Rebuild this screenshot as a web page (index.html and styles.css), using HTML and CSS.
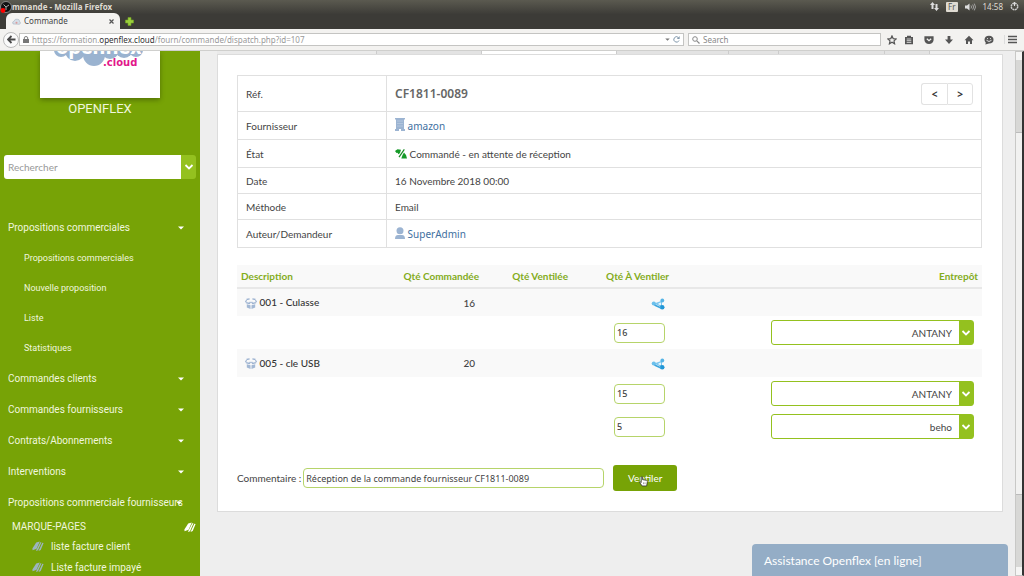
FILE: index.html
```html
<!DOCTYPE html>
<html lang="fr">
<head>
<meta charset="utf-8">
<title>Commande</title>
<link rel="stylesheet" href="styles.css">
</head>
<body>
<svg class="defs" aria-hidden="true">
  <symbol id="chevron" viewBox="0 0 10 8"><path d="M1.500 2 5 5.500 8.500 2" fill="none" stroke="currentColor" stroke-width="1.800"/></symbol>
  <symbol id="caret" viewBox="0 0 6 4"><path d="M0 .5h6L3 3.500z" fill="currentColor"/></symbol>
  <symbol id="book" viewBox="0 0 12 11"><path d="M4.200 1.500 7.800.6 4.600 7.800.6 9.200.4 7.500z" fill="currentColor"/><path d="M8.300 1.200h1.200L6 9.200 3.800 10zM10.300 1.800l1.300.2L8.700 9l-2.200 1z" fill="currentColor"/></symbol>
  <symbol id="box" viewBox="0 0 12 12"><path d="M1.500 1.500 4.600.9M7.400.9l3.100.6M.4 4.300l1.100-2M11.600 4.300l-1.100-2M1 4.700l3.300.8L5.500 3.800M11 4.700l-3.300.8L6.500 3.800" fill="none" stroke="#9cb2d0" stroke-width="1.300"/><path d="M1.800 6.200 5.500 7.300V11L1.800 9.500zM10.200 6.200 6.500 7.300V11l3.700-1.500z" fill="#a3b8d4"/></symbol>
  <symbol id="split" viewBox="0 0 14 12"><path d="M3 5.500 11 2.800v6.500z" fill="#7cc6ee"/><path d="M7.500 5.200 10 4.400v3L7.500 6.600z" fill="#e4f4fc"/><circle cx="2.800" cy="5.500" r="2.100" fill="#6cc0ec"/><circle cx="11.300" cy="2.500" r="1.900" fill="#55b4e6"/><circle cx="11.200" cy="9.300" r="2.300" fill="#2196d6"/><path d="M3.500 7 10 10" stroke="#3ba5de" stroke-width="1.600"/></symbol>
</svg>
<header class="titlebar">
  <div class="window-row">
    <svg class="orb" viewBox="0 0 12 12" aria-hidden="true"><circle cx="6" cy="6" r="5.500" fill="#111" stroke="#aaa" stroke-width=".7"/><path d="M3.500 3.500 6 6l3-2M6 6v3" stroke="#aaa" fill="none"/><circle cx="3" cy="9.500" r="2.400" fill="#f00"/></svg>
    <span class="window-title">mmande - Mozilla Firefox</span>
    <div class="tray">
      <svg width="9" height="9" viewBox="0 0 9 9" aria-label="Réseau"><path d="M2.500 0 5 3H3.500v4h-2V3H0zM6.500 9 9 6H7.500V2h-2v4H4z" fill="#ddd"/></svg>
      <span class="lang">Fr</span>
      <svg width="11" height="8" viewBox="0 0 11 8" aria-label="Volume"><path d="M0 2.500h2L4.500.5v7L2 5.500H0z" fill="#ddd"/><path d="M6 2.500q1 1.500 0 3M7.700 1.500q1.700 2.500 0 5M9.300.6q2.400 3.400 0 6.800" fill="none" stroke="#bbb" stroke-width=".8"/></svg>
      <span>14:58</span>
      <svg width="9" height="9" viewBox="0 0 10 10" aria-label="Session"><circle cx="5" cy="5" r="3.600" fill="none" stroke="#ccc" stroke-width="1.600" stroke-dasharray="2.200 .6"/><path d="M5 0v4.500" stroke="#ddd" stroke-width="1.300"/></svg>
    </div>
  </div>
  <div class="tab-row">
    <div class="tab">
      <svg width="9" height="7" viewBox="0 0 9 7" aria-hidden="true"><path d="M1 6Q-.2 3.500 2.200 3 3 .5 5.200 1.200 7.500 1 7.700 3.600 9.500 5 7.500 6.300z" fill="#d6dfe8" stroke="#9cabb9" stroke-width=".5"/><circle cx="4.500" cy="4.800" r="1" fill="#d99"/></svg>
      <span class="tab-name">Commande</span>
      <button class="plain" aria-label="Fermer l'onglet"><svg width="5" height="5" viewBox="0 0 5 5"><path d="m.5.5 4 4m0-4-4 4" stroke="#555" stroke-width="1.200"/></svg></button>
    </div>
    <button class="plain" aria-label="Nouvel onglet"><svg width="9" height="9" viewBox="0 0 9 9"><path d="M3 .5h3V3h2.500v3H6v2.500H3V6H.5V3H3z" fill="#9bcf3c" stroke="#74a524" stroke-width=".6"/></svg></button>
  </div>
</header>
<nav class="toolbar" aria-label="Navigation">
  <button class="back" aria-label="Retour"><svg width="9" height="9" viewBox="0 0 9 9"><path d="M4.500 1 1 4.500 4.500 8M1 4.500h7.500" fill="none" stroke="#4a4a4a" stroke-width="1.800"/></svg></button>
  <div class="address">
    <svg width="6" height="7" viewBox="0 0 6 7" aria-hidden="true"><path d="M0 3h6v4H0z" fill="#777"/><path d="M1.300 3V1.800q0-1.200 1.700-1.200t1.700 1.200V3" fill="none" stroke="#777"/></svg>
    <span class="url">https://formation.<b>openflex.cloud</b>/fourn/commande/dispatch.php?id=107</span>
    <svg width="5" height="3" class="muted"><use href="#caret"/></svg>
    <svg width="7" height="7" viewBox="0 0 7 7" aria-hidden="true"><path d="M5.300 1.400A2.700 2.700 0 1 0 6 4.500" fill="none" stroke="#8298ab"/><path d="M6.600 0v3H3.800z" fill="#8298ab"/></svg>
  </div>
  <div class="find">
    <svg width="8" height="8" viewBox="0 0 8 8" aria-hidden="true"><circle cx="3" cy="3" r="2.300" fill="none" stroke="#888"/><path d="m4.800 4.800 2.700 2.700" stroke="#888" stroke-width="1.200"/></svg>
    <input type="text" placeholder="Search" aria-label="Search">
  </div>
  <div class="tools">
    <span class="bookmarks">
      <button class="plain" aria-label="Favoris"><svg width="10" height="10" viewBox="0 0 10 10"><path d="m5 .9 1.200 2.700 3 .3L7 5.900l.6 2.900L5 7.300 2.400 8.800 3 5.900.8 3.900l3-.3z" fill="none" stroke="#555" stroke-width="1.200"/></svg></button>
      <button class="plain" aria-label="Liste"><svg width="10" height="10" viewBox="0 0 10 10"><path d="M1 2h2V.7h4V2h2v7.300H1z" fill="#555"/><path d="M2.700 4h4.600M2.700 5.700h4.600M2.700 7.400h4.600" stroke="#eee" stroke-width=".8"/></svg></button>
    </span>
    <button class="plain" aria-label="Pocket"><svg width="10" height="10" viewBox="0 0 10 10"><path d="M.4 1.200h9.200V5Q9 9 5 9 1 9 .4 5z" fill="#555"/><path d="m2.800 3.800 2.200 2 2.200-2" fill="none" stroke="#f4f4f2" stroke-width="1.200"/></svg></button>
    <button class="plain" aria-label="Téléchargements"><svg width="10" height="10" viewBox="0 0 10 10"><path d="M3.600 1h2.800v3.600H9L5 9 1 4.600h2.600z" fill="#555"/></svg></button>
    <button class="plain" aria-label="Accueil"><svg width="10" height="10" viewBox="0 0 10 10"><path d="m5 .8 4.500 4.400H8V9H6V6.500H4V9H2V5.200H.5z" fill="#555"/></svg></button>
    <button class="plain" aria-label="Discussion"><svg width="10" height="10" viewBox="0 0 10 10"><path d="M5 .8q4.500.3 4.500 4T5 8.600L1.300 9.500 1.800 7.700Q.5 6.500.5 4.800.7 1 5 .8z" fill="#555"/><path d="M3 3.600h1m2 0h1M2.500 5.300q2.500 2.400 5 0" fill="none" stroke="#eee" stroke-width=".9"/></svg></button>
    <button class="plain menu" aria-label="Menu"><svg width="9" height="9" viewBox="0 0 9 9"><path d="M0 1.500h9M0 4.500h9M0 7.500h9" stroke="#555" stroke-width="1.600"/></svg></button>
  </div>
</nav>
<div class="viewport">
  <aside class="sidebar">
    <div class="logo">
      <svg viewBox="0 0 120 47" aria-label="openflex.cloud"><g fill="#9ab3d0"><circle cx="21" cy="-1" r="7"/><circle cx="35" cy="0" r="10"/><circle cx="54" cy="4" r="11"/><circle cx="70" cy="-1" r="9"/><circle cx="84" cy="-2" r="9"/><circle cx="96" cy="-1" r="7"/></g><text class="logo-main" x="16" y="3">openflex</text><text class="logo-sub" x="63" y="15">.cloud</text></svg>
    </div>
    <h1 class="brand">OPENFLEX</h1>
    <div class="search">
      <input type="text" placeholder="Rechercher" aria-label="Rechercher">
      <button class="search-open" aria-label="Choisir le type de recherche"><svg width="10" height="8"><use href="#chevron"/></svg></button>
    </div>
    <nav class="menu-list" aria-label="Menu principal">
      <a class="group" href="#">Propositions commerciales<svg class="arrow"><use href="#caret"/></svg></a>
      <a class="item" href="#">Propositions commerciales</a>
      <a class="item" href="#">Nouvelle proposition</a>
      <a class="item" href="#">Liste</a>
      <a class="item" href="#">Statistiques</a>
      <a class="group" href="#">Commandes clients<svg class="arrow"><use href="#caret"/></svg></a>
      <a class="group" href="#">Commandes fournisseurs<svg class="arrow"><use href="#caret"/></svg></a>
      <a class="group" href="#">Contrats/Abonnements<svg class="arrow"><use href="#caret"/></svg></a>
      <a class="group" href="#">Interventions<svg class="arrow"><use href="#caret"/></svg></a>
      <a class="group" href="#">Propositions commerciale fournisseurs<svg class="arrow"><use href="#caret"/></svg></a>
    </nav>
    <h2 class="marks-title">MARQUE-PAGES<svg width="12" height="11"><use href="#book"/></svg></h2>
    <a class="mark" href="#"><svg width="12" height="11"><use href="#book"/></svg>liste facture client</a>
    <a class="mark" href="#"><svg width="12" height="11"><use href="#book"/></svg>Liste facture impayé</a>
  </aside>
  <main class="content">
    <div class="page-tabs"><i></i><i></i><i class="active"></i><i></i><i></i><i></i><i></i></div>
    <section class="card">
      <table class="details">
        <tr class="ref-row"><th scope="row">Réf.</th><td><div class="ref"><strong>CF1811-0089</strong><span class="pager"><a href="#" aria-label="Précédent">&lt;</a><a href="#" aria-label="Suivant">&gt;</a></span></div></td></tr>
        <tr class="tall"><th scope="row">Fournisseur</th><td><a href="#"><svg width="10" height="13" viewBox="0 0 10 13" aria-hidden="true"><path d="M0 0h10v1.500H9V11h1v2H6v-2H4v2H0v-2h1V1.500H0z" fill="#9cb4d2"/><path d="M2.500 3h5M2.500 5.500h5M2.500 8h5" stroke="#c9d7e8" stroke-dasharray="1 1"/></svg> amazon</a></td></tr>
        <tr class="tall"><th scope="row">État</th><td><svg width="12" height="10" viewBox="0 0 12 10" aria-hidden="true"><path d="M0 2 2.500.3 6 .8 5 4 3.500 5.200 2.500 3.800 1.500 4z" fill="#169a28"/><path d="m8.800 0 1 .7L4.500 8.500l-1-.7z" fill="#168a22"/><path d="M9 3.500 11 6l1 3.500H6.300L7.500 6z" fill="#169a28"/></svg> Commandé - en attente de réception</td></tr>
        <tr><th scope="row">Date</th><td>16 Novembre 2018 00:00</td></tr>
        <tr><th scope="row">Méthode</th><td>Email</td></tr>
        <tr class="tall"><th scope="row">Auteur/Demandeur</th><td><a href="#"><svg width="10" height="12" viewBox="0 0 10 12" aria-hidden="true"><circle cx="5" cy="3.700" r="3.500" fill="#9cb4d2"/><path d="M0 12q0-4 3-4h4q3 0 3 4z" fill="#9cb4d2"/></svg> SuperAdmin</a></td></tr>
      </table>
      <table class="lines">
        <colgroup><col class="c-desc"><col class="c-qty"><col class="c-vent"><col class="c-todo"><col></colgroup>
        <thead><tr><th>Description</th><th>Qté Commandée</th><th>Qté Ventilée</th><th>Qté À Ventiler</th><th class="end">Entrepôt</th></tr></thead>
        <tbody>
          <tr class="product"><td class="name"><svg width="12" height="12"><use href="#box"/></svg> 001 - Culasse</td><td class="num">16</td><td></td><td class="num"><svg width="14" height="12"><use href="#split"/></svg></td><td></td></tr>
          <tr class="entry"><td colspan="3"></td><td class="num"><input type="text" value="16" aria-label="Quantité 001"></td><td class="end"><select aria-label="Entrepôt 001"><option>ANTANY</option><option>beho</option></select></td></tr>
          <tr class="product"><td class="name"><svg width="12" height="12"><use href="#box"/></svg> 005 - cle USB</td><td class="num">20</td><td></td><td class="num"><svg width="14" height="12"><use href="#split"/></svg></td><td></td></tr>
          <tr class="entry"><td colspan="3"></td><td class="num"><input type="text" value="15" aria-label="Quantité 005"></td><td class="end"><select aria-label="Entrepôt 005"><option>ANTANY</option><option>beho</option></select></td></tr>
          <tr class="entry"><td colspan="3"></td><td class="num"><input type="text" value="5" aria-label="Quantité 005, ligne 2"></td><td class="end"><select aria-label="Entrepôt 005, ligne 2"><option>beho</option><option>ANTANY</option></select></td></tr>
        </tbody>
      </table>
      <form class="comment">
        <label for="comment">Commentaire :</label>
        <input id="comment" type="text" value="Réception de la commande fournisseur CF1811-0089">
        <button type="button" class="submit">Ventiler<svg class="hand" viewBox="0 0 10 12" aria-hidden="true"><path d="M2.500 6.500V1.500q.8-1 1.500 0v3l4.500.8q.8.300.8 1.200L8.500 11.500h-5L.7 7.600q0-1.300 1.800 0z" fill="#fff" stroke="#222" stroke-width=".8"/><path d="M5 7.500v2M6.700 7.500v2" stroke="#555" stroke-width=".6"/></svg></button>
      </form>
    </section>
    <button class="chat">Assistance Openflex [en ligne]</button>
  </main>
  <div class="scrollbar" aria-hidden="true"><span class="cap"></span><span class="track"></span><span class="thumb"></span><span class="track"></span><span class="cap"></span></div>
</div>
</body>
</html>
```
FILE: styles.css
```css
* { box-sizing: border-box; }
body {
  margin: 0;
  height: 100vh;
  display: flex;
  flex-direction: column;
  overflow: hidden;
  font: 10px/14px "Noto Sans", sans-serif;
  color: #444;
}
a { color: inherit; text-decoration: none; }
button, input, select { font: inherit; color: inherit; }
.defs { display: none; }
.plain { display: flex; padding: 0; border: 0; background: none; }

/* Browser window */
.titlebar {
  flex: none;
  background: linear-gradient(#5b5a50, #3c3b37 50%);
  color: #dfdbd2;
}
.window-row { display: flex; align-items: center; height: 13px; padding-right: 5px; font-size: 8px; line-height: 13px; }
.orb { width: 12px; height: 12px; flex: none; }
.window-title { font-weight: bold; }
.tray { margin-left: auto; display: flex; align-items: center; gap: 7px; }
.lang { background: #dfdbd2; color: #555; padding: 0 2px; line-height: 10px; border-radius: 1px; }
.tab-row { display: flex; align-items: center; height: 16px; gap: 5px; padding-left: 6px; }
.tab {
  display: flex;
  align-items: center;
  gap: 3px;
  width: 114px;
  height: 16px;
  padding: 0 6px;
  background: #f4f3f1;
  border-radius: 6px 6px 0 0;
  color: #444;
  font-size: 8px;
}
.tab-name { flex: 1; }
.toolbar {
  flex: none;
  display: flex;
  align-items: center;
  height: 22px;
  padding: 0 7px 0 3px;
  background: #f3f2f0;
  border-bottom: 1px solid #cfcfcd;
  font-size: 8px;
}
.back {
  flex: none;
  display: grid;
  place-items: center;
  width: 16px;
  height: 16px;
  padding: 0;
  border: 1px solid #bbb;
  border-radius: 50%;
  background: #fafafa;
}
.address, .find { display: flex; align-items: center; height: 13px; background: #fff; border: 1px solid #c4c4c2; }
.address { flex: 1; gap: 3px; padding: 0 3px; color: #999; }
.address b { font-weight: normal; color: #333; }
.url { flex: 1; }
.muted { color: #777; }
.find { width: 193px; margin-left: 4px; gap: 3px; padding: 0 3px; }
.find input { flex: 1; min-width: 0; padding: 0; border: 0; background: none; }
.find input::placeholder { color: #888; }
.tools { display: flex; align-items: center; gap: 10px; padding-left: 6px; }
.bookmarks { display: flex; gap: 7px; }
.menu { padding-left: 3px; border-left: 1px solid #ddd; }

.viewport { flex: 1; min-height: 0; display: flex; overflow: hidden; background: #eee; }

/* Sidebar */
.sidebar {
  flex: none;
  width: 200px;
  overflow: hidden;
  background: #77a306;
  color: #f0f6df;
  font-family: Roboto, sans-serif;
}
.logo { width: 120px; height: 47px; margin: 0 auto; background: #fff; box-shadow: 0 2px 5px rgba(0, 0, 0, .3); }
.logo svg { display: block; width: 120px; height: 47px; overflow: hidden; }
.logo-main { font: bold 22px Roboto, sans-serif; fill: #fff; }
.logo-sub { font: bold 10px "DejaVu Sans", sans-serif; fill: #e2178a; }
.brand { margin: 3px 0 0; font-size: 13px; line-height: 16px; font-weight: normal; text-align: center; }
.search { display: flex; height: 24px; margin: 38px 4px 0; border-radius: 3px; overflow: hidden; }
.search input { flex: 1; min-width: 0; padding: 0 4px; border: 0; background: #fff; font-family: Lato, sans-serif; }
.search input::placeholder { color: #999; }
.search-open { display: grid; place-items: center; width: 15px; padding: 0; border: 0; background: #94c11f; color: #fff; }
.menu-list { margin-top: 33px; }
.group { display: flex; align-items: center; height: 31px; padding: 0 16px 0 8px; white-space: nowrap; }
.arrow { flex: none; width: 6px; height: 4px; margin-left: auto; color: #fff; }
.group:last-child .arrow { margin-left: -7px; }
.item { display: flex; align-items: center; height: 30px; padding-left: 24px; font-size: 9px; }
.marks-title { display: flex; justify-content: space-between; align-items: center; height: 18px; margin: 0; padding: 0 4px 0 12px; font-size: 10px; font-weight: normal; }
.marks-title svg { color: #fff; }
.mark { display: flex; align-items: center; gap: 7px; height: 21px; padding-left: 32px; }
.mark svg { color: #9cb4c0; }

/* Page */
.content { flex: 1; min-width: 0; padding: 0 12px 0 17px; position: relative; font-family: Lato, sans-serif; }
.page-tabs { display: flex; height: 3px; }
.page-tabs i { width: 50px; background: #e3e3e3; border-right: 1px solid #ccc; }
.page-tabs i:nth-child(1) { width: 160px; background: #eaeaea; }
.page-tabs i:nth-child(2) { width: 105px; }
.page-tabs i.active { width: 135px; background: #fff; }
.page-tabs i:nth-child(4) { width: 112px; }
.page-tabs i:nth-child(6) { width: 106px; }
.page-tabs i:nth-child(7) { width: 45px; }
.card { padding: 20px 20px 20px 19px; background: #fff; border: 1px solid #dcdcdc; }
.details, .lines { width: 100%; border-collapse: collapse; }
.details { border: 1px solid #e0e0e0; }
.details th, .details td { height: 26px; padding: 0 8px; border: 1px solid #e0e0e0; text-align: left; font-weight: normal; }
.details th { width: 149px; }
.details .tall > * { height: 28px; }
.details .ref-row > * { height: 36px; }
.details svg { vertical-align: -1px; }
.details td a { color: #41709f; font-family: "Noto Sans", sans-serif; }
.ref { display: flex; align-items: center; justify-content: space-between; }
.ref strong { font: 600 12px "Noto Sans", sans-serif; color: #666; }
.pager { display: flex; }
.details .pager a { width: 26px; line-height: 20px; border: 1px solid #e2e2e2; text-align: center; color: #333; font-weight: bold; border-radius: 0 3px 3px 0; }
.details .pager a:first-child { border-right: 0; border-radius: 3px 0 0 3px; }
.lines { margin-top: 17px; table-layout: fixed; }
.c-desc { width: 161px; }
.c-qty { width: 85px; }
.c-vent { width: 89px; }
.c-todo { width: 101px; }
.lines th { height: 23px; padding: 0 4px; background: #f9f9f9; border-bottom: 2px solid #e8e8e8; color: #83ac1c; text-align: right; white-space: nowrap; }
.lines th:first-child { text-align: left; }
.lines td { height: 33px; padding: 0 4px; }
.lines .product td { height: 28px; background: #f9f9f9; }
.lines .name { padding-left: 8px; color: #333; font-weight: 500; }
.lines .num { padding-right: 8px; text-align: right; font-weight: 500; }
.lines .end { padding-right: 8px; text-align: right; }
.lines th.end { padding-right: 4px; }
.lines svg { vertical-align: middle; }
.lines input, .comment input { height: 20px; padding: 0 2px; border: 1px solid #b6d46a; border-radius: 4px; background: #fff; font-family: "Noto Sans", sans-serif; font-size: 9px; }
.lines input { width: 51px; }
.lines select {
  appearance: none;
  width: 203px;
  height: 25px;
  padding: 0 21px 0 4px;
  border: 1px solid #94c11f;
  border-radius: 3px;
  text-align-last: right;
  background: url("data:image/svg+xml,%3Csvg xmlns='http://www.w3.org/2000/svg' width='14' height='24'%3E%3Cpath d='M0 0h14v24H0z' fill='%2394c11f'/%3E%3Cpath d='m3.500 10 3.500 3.500L10.500 10' fill='none' stroke='white' stroke-width='1.800'/%3E%3C/svg%3E") right center no-repeat #fff;
}
.comment { display: flex; align-items: center; margin-top: 22px; }
.comment input { width: 301px; margin: 0 9px 0 2px; }
.submit { position: relative; width: 64px; height: 26px; padding: 0; border: 0; border-radius: 3px; background: #77a306; color: #fff; }
.hand { position: absolute; left: 26px; top: 10px; width: 9px; height: 12px; }
.chat {
  position: absolute;
  right: 7px;
  bottom: 0;
  width: 256px;
  height: 32px;
  padding: 0 12px;
  border: 0;
  border-radius: 4px 4px 0 0;
  background: #94adc6;
  color: #fff;
  font: 12px Lato, sans-serif;
  text-align: left;
}
.scrollbar { flex: none; width: 9px; display: flex; flex-direction: column; border: 1px solid #c8c8c6; border-right: 2px solid #333; }
.cap { height: 8px; background: #f5f5f4; }
.track { flex: 1; background: #d8d8d6; }
.thumb { flex: 5; background: #f1f1f0; border: 1px solid #bbb; border-width: 1px 0; }
```
